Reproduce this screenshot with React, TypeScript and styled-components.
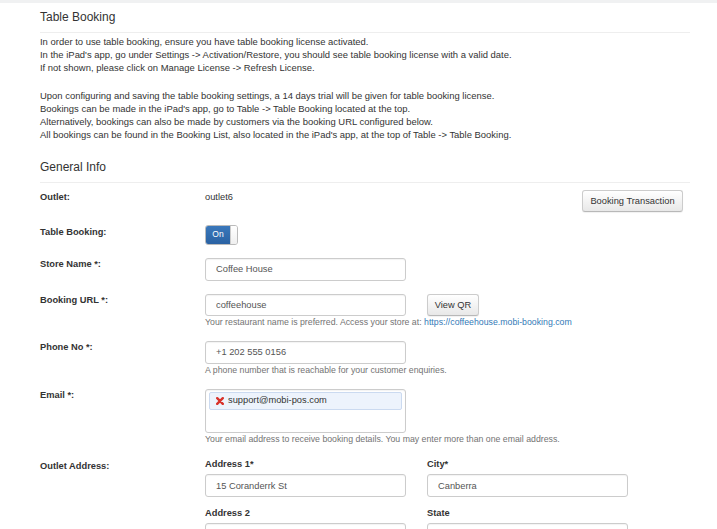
import React from 'react';
import styled, { createGlobalStyle } from 'styled-components';

const GlobalStyle = createGlobalStyle`
  html, body {
    margin: 0;
    padding: 0;
    background: #fff;
    overflow: hidden;
  }
  body {
    font-family: "Liberation Sans", Arial, Helvetica, sans-serif;
    font-size: 9.3px;
    line-height: 13.2px;
    color: #333;
  }
`;

const TopStrip = styled.div`
  height: 3px;
  background: #f0f1f2;
`;

const Page = styled.div`
  padding: 0 27px 0 40px;
`;

const SectionTitle = styled.h2<{ $top: number }>`
  margin: ${(p) => p.$top}px 0 0 0;
  padding-bottom: 7px;
  font-size: 12px;
  line-height: 16px;
  font-weight: normal;
  color: #333;
  border-bottom: 1px solid #eee;
`;

const Intro = styled.div`
  margin-top: 2px;
  font-size: 9.45px;
`;

const Para = styled.p`
  margin: 0 0 14px 0;
  &:last-child {
    margin-bottom: 0;
  }
`;

const Form = styled.div`
  margin-top: 8px;
`;

const Row = styled.div<{ $gap?: number }>`
  display: flex;
  margin-top: ${(p) => p.$gap ?? 0}px;
  margin-bottom: 13px;
`;

const Label = styled.div<{ $pad?: number }>`
  width: 165px;
  flex: none;
  font-weight: bold;
  padding-top: ${(p) => p.$pad ?? 0}px;
`;

const Field = styled.div`
  flex: 1;
  display: flex;
  flex-direction: column;
  align-items: flex-start;
`;

const InlineField = styled.div`
  flex: 1;
  display: flex;
  justify-content: space-between;
  align-items: flex-start;
`;

const Line = styled.div`
  display: flex;
  align-items: center;
`;

const Button = styled.button<{ $w: number; $h?: number }>`
  width: ${(p) => p.$w}px;
  height: ${(p) => p.$h ?? 22}px;
  box-sizing: border-box;
  padding: 0;
  font-family: inherit;
  font-size: 9.3px;
  color: #333;
  background: linear-gradient(#ffffff, #e8e8e8);
  border: 1px solid #ccc;
  border-bottom-color: #b8b8b8;
  border-radius: 3px;
  box-shadow: 0 1px 1px rgba(0, 0, 0, 0.06);
`;

const TransactionButton = styled(Button)`
  margin-top: -1.5px;
  margin-right: 7px;
`;

const QrButton = styled(Button)`
  margin-left: 21px;
`;

const Toggle = styled.div`
  display: flex;
  width: 33px;
  height: 20px;
  box-sizing: border-box;
  border: 1px solid #bbb;
  border-radius: 3px;
  overflow: hidden;
`;

const ToggleOn = styled.div`
  width: 24px;
  display: flex;
  align-items: center;
  justify-content: center;
  color: #fff;
  font-size: 8.5px;
  background: linear-gradient(#3a78bb, #2a62a3);
`;

const ToggleHandle = styled.div`
  flex: 1;
  background: linear-gradient(#ffffff, #efefef);
  border-left: 1px solid #ccc;
`;

const TextInput = styled.input`
  width: 201px;
  height: 22.6px;
  box-sizing: border-box;
  padding: 0 10px;
  font-family: inherit;
  font-size: 9.3px;
  color: #555;
  background: #fff;
  border: 1px solid #ccc;
  border-radius: 3px;
  box-shadow: inset 0 1px 1px rgba(0, 0, 0, 0.05);
  outline: none;
`;

const Help = styled.div`
  color: #737373;
  font-size: 8.75px;
  line-height: 12px;
`;

const Link = styled.a`
  color: #337ab7;
  text-decoration: none;
`;

const EmailBox = styled.div`
  width: 201px;
  height: 44px;
  box-sizing: border-box;
  padding: 2px 3px;
  border: 1px solid #ccc;
  border-radius: 3px;
  box-shadow: inset 0 1px 1px rgba(0, 0, 0, 0.05);
`;

const Tag = styled.div`
  display: flex;
  align-items: center;
  gap: 4px;
  height: 18px;
  box-sizing: border-box;
  padding: 0 6px;
  background: #edf3fc;
  border: 1px solid #cbdaf0;
  border-radius: 2px;
  color: #333;
  font-size: 9.3px;
`;

const AddressGrid = styled.div`
  display: grid;
  grid-template-columns: 201px 201px;
  column-gap: 21px;
  row-gap: 10px;
`;

const AddressCell = styled.div`
  display: flex;
  flex-direction: column;
  gap: 3.4px;
`;

const SubLabel = styled.div`
  font-weight: bold;
`;

const RemoveIcon = () => (
  <svg width="8" height="8" viewBox="0 0 8 8">
    <path d="M1.2 1.2 L6.8 6.8 M6.8 1.2 L1.2 6.8" stroke="#d8322a" strokeWidth="2.4" strokeLinecap="round" />
  </svg>
);

const address = [
  { label: 'Address 1*', value: '15 Coranderrk St' },
  { label: 'City*', value: 'Canberra' },
  { label: 'Address 2', value: '' },
  { label: 'State', value: '' },
];

const App: React.FC = () => {
  return (
    <>
      <GlobalStyle />
      <TopStrip />
      <Page>
        <SectionTitle $top={6}>Table Booking</SectionTitle>
        <Intro>
          <Para>
            In order to use table booking, ensure you have table booking license activated.
            <br />
            In the iPad's app, go under Settings -&gt; Activation/Restore, you should see table booking license with a valid date.
            <br />
            If not shown, please click on Manage License -&gt; Refresh License.
          </Para>
          <Para>
            Upon configuring and saving the table booking settings, a 14 days trial will be given for table booking license.
            <br />
            Bookings can be made in the iPad's app, go to Table -&gt; Table Booking located at the top.
            <br />
            Alternatively, bookings can also be made by customers via the booking URL configured below.
            <br />
            All bookings can be found in the Booking List, also located in the iPad's app, at the top of Table -&gt; Table Booking.
          </Para>
        </Intro>

        <SectionTitle $top={18}>General Info</SectionTitle>
        <Form>
          <Row>
            <Label>Outlet:</Label>
            <InlineField>
              <span>outlet6</span>
              <TransactionButton $w={101}>Booking Transaction</TransactionButton>
            </InlineField>
          </Row>

          <Row>
            <Label $pad={1.5}>Table Booking:</Label>
            <Field>
              <Toggle>
                <ToggleOn>On</ToggleOn>
                <ToggleHandle />
              </Toggle>
            </Field>
          </Row>

          <Row>
            <Label>Store Name *:</Label>
            <Field>
              <TextInput readOnly value="Coffee House" />
            </Field>
          </Row>

          <Row>
            <Label>Booking URL *:</Label>
            <Field>
              <Line>
                <TextInput readOnly value="coffeehouse" />
                <QrButton $w={52}>View QR</QrButton>
              </Line>
              <Help>
                Your restaurant name is preferred. Access your store at:{' '}
                <Link href="#">https://coffeehouse.mobi-booking.com</Link>
              </Help>
            </Field>
          </Row>

          <Row>
            <Label>Phone No *:</Label>
            <Field>
              <TextInput readOnly value="+1 202 555 0156" />
              <Help>A phone number that is reachable for your customer enquiries.</Help>
            </Field>
          </Row>

          <Row>
            <Label>Email *:</Label>
            <Field>
              <EmailBox>
                <Tag>
                  <RemoveIcon />
                  support@mobi-pos.com
                </Tag>
              </EmailBox>
              <Help>Your email address to receive booking details. You may enter more than one email address.</Help>
            </Field>
          </Row>

          <Row $gap={1.5}>
            <Label $pad={2}>Outlet Address:</Label>
            <Field>
              <AddressGrid>
                {address.map((a) => (
                  <AddressCell key={a.label}>
                    <SubLabel>{a.label}</SubLabel>
                    <TextInput readOnly value={a.value} />
                  </AddressCell>
                ))}
              </AddressGrid>
            </Field>
          </Row>
        </Form>
      </Page>
    </>
  );
};

export default App;
